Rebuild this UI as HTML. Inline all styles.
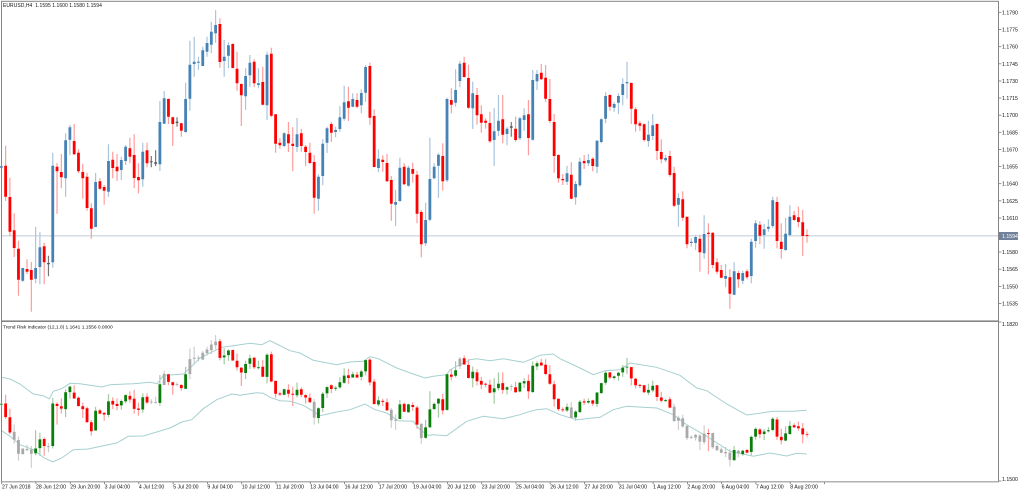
<!DOCTYPE html>
<html>
<head>
<meta charset="utf-8">
<style>
html,body{margin:0;padding:0;background:#fff;}
#w{position:relative;width:1024px;height:493px;overflow:hidden;background:#fff;}
svg{position:absolute;left:0;top:0;filter:blur(0.3px);}
text{font-family:"Liberation Sans",sans-serif;font-size:5.2px;fill:#111;}
.p{font-size:5px;letter-spacing:.05px;}
.q{font-size:4.85px;}
</style>
</head>
<body>
<div id="w">
<svg id="s" width="1024" height="493" viewBox="0 0 1024 493" xmlns="http://www.w3.org/2000/svg">
<rect x="0" y="0" width="1024" height="493" fill="#fff"/>
<rect x="1.4" y="235.1" width="997" height="1.4" fill="#d3dae0"/>
<g id="c"></g>
<g id="frame" fill="#858585">
<rect x="1" y="0.8" width="998" height="1"/>
<rect x="1" y="1" width="1" height="481"/>
<rect x="998" y="1" width="1" height="481"/>
<rect x="1" y="320.4" width="998" height="1.6"/>
<rect x="1" y="481.2" width="998" height="1.2" fill="#a0a0a0"/>
</g>
<g id="t" fill="#777"></g>
<rect x="999" y="232" width="19" height="8" fill="#6f8299"/>
<g>
<text x="3" y="6.8" class="p" xml:space="preserve">EURUSD,H4  1.1595 1.1600 1.1580 1.1594</text>
<text x="3" y="328.6" class="q">Trend Risk Indicator (12,1.0) 1.1641 1.1556 0.0000</text>
<text x="1002" y="14.3">1.1790</text>
<text x="1002" y="31.5">1.1775</text>
<text x="1002" y="48.7">1.1760</text>
<text x="1002" y="65.8">1.1745</text>
<text x="1002" y="83">1.1730</text>
<text x="1002" y="100">1.1715</text>
<text x="1002" y="117.2">1.1700</text>
<text x="1002" y="134.3">1.1685</text>
<text x="1002" y="151.4">1.1670</text>
<text x="1002" y="168.6">1.1655</text>
<text x="1002" y="185.7">1.1640</text>
<text x="1002" y="202.8">1.1625</text>
<text x="1002" y="220">1.1610</text>
<text x="1002" y="238.1" style="fill:#fff">1.1594</text>
<text x="1002" y="254">1.1580</text>
<text x="1002" y="271.2">1.1565</text>
<text x="1002" y="288.4">1.1550</text>
<text x="1002" y="305.5">1.1535</text>
<text x="1002" y="326">1.1820</text>
<text x="1002" y="480.8">1.1500</text>
<text x="2" y="488.4">27 Jun 2018</text>
<text x="36" y="488.4">28 Jun 12:00</text>
<text x="70.3" y="488.4">29 Jun 20:00</text>
<text x="104.6" y="488.4">3 Jul 04:00</text>
<text x="138.9" y="488.4">4 Jul 12:00</text>
<text x="173.2" y="488.4">5 Jul 20:00</text>
<text x="207.4" y="488.4">9 Jul 04:00</text>
<text x="241.7" y="488.4">10 Jul 12:00</text>
<text x="276" y="488.4">11 Jul 20:00</text>
<text x="310.3" y="488.4">13 Jul 04:00</text>
<text x="344.6" y="488.4">16 Jul 12:00</text>
<text x="378.8" y="488.4">17 Jul 20:00</text>
<text x="413.1" y="488.4">19 Jul 04:00</text>
<text x="447.4" y="488.4">20 Jul 12:00</text>
<text x="481.7" y="488.4">23 Jul 20:00</text>
<text x="516" y="488.4">25 Jul 04:00</text>
<text x="550.2" y="488.4">26 Jul 12:00</text>
<text x="584.5" y="488.4">27 Jul 20:00</text>
<text x="618.8" y="488.4">31 Jul 04:00</text>
<text x="653.1" y="488.4">1 Aug 12:00</text>
<text x="687.4" y="488.4">2 Aug 20:00</text>
<text x="721.6" y="488.4">6 Aug 04:00</text>
<text x="755.9" y="488.4">7 Aug 12:00</text>
<text x="790.2" y="488.4">8 Aug 20:00</text>
</g>
</svg>
</div>
<script>
var D="498,504,499,503,b;437,603,497,590,r;533,708,591,695,r;640,771,691,744,r;722,887,746,839,r;803,845,804,842,b;778,822,807,815,r;786,935,810,839,r;680,850,804,836,b;697,853,742,801,b;728,853,739,787,r;767,829,790,792,k;458,803,497,787,b;489,641,500,514,r;462,565,516,532,r;400,590,421,535,b;375,465,382,419,b;372,465,423,463,r;448,520,458,514,r;491,596,516,535,r;518,632,530,624,r;610,716,625,686,r;519,682,546,681,b;534,570,544,566,r;555,614,561,572,r;433,590,483,575,b;455,535,479,504,r;462,542,500,514,r;470,540,480,510,b;435,495,440,483,b;413,490,445,470,r;403,565,465,534,r;490,580,531,541,r;428,560,455,538,b;428,502,451,490,r;468,502,484,487,k;451,498,488,490,k;303,513,366,493,b;273,372,295,371,b;295,372,297,350,r;350,438,352,372,r;352,380,366,368,k;368,410,370,392,r;248,398,297,396,b;122,332,194,296,b;110,230,185,192,b;170,210,185,188,b;140,198,151,198,b;110,170,129,155,b;65,160,95,134,b;30,128,75,100,b;55,203,72,186,r;120,230,170,183,b;127,205,136,167,b;130,205,132,204,r;155,272,206,250,r;250,378,252,286,r;205,330,228,289,b;165,260,188,226,b;178,262,185,250,r;205,265,250,255,b;200,316,246,314,r;155,360,164,316,b;"
+"143,352,161,347,r;343,458,343,431,r;415,446,428,436,r;397,442,400,438,b;366,456,403,430,r;382,514,431,438,r;354,456,403,441,b;386,455,400,438,r;435,498,440,456,r;428,492,458,489,r;465,641,486,593,r;523,632,530,596,b;418,556,431,528,b;380,459,385,428,b;366,426,372,398,r;380,412,390,396,b;318,395,352,387,b;257,362,307,356,b;260,363,304,323,r;280,322,297,320,b;280,325,300,320,r;268,340,279,316,b;195,305,201,278,b;188,374,198,353,r;328,502,348,501,r;448,517,476,504,b;466,515,479,486,r;462,546,489,544,r;528,662,540,611,r;570,678,606,614,b;473,605,503,603,b;490,555,500,553,r;497,560,503,557,b;488,548,507,521,r;512,670,524,641,r;630,772,636,733,r;608,738,660,730,b;413,664,537,659,b;490,538,500,535,b;460,593,464,497,b;430,572,468,544,r;293,546,297,541,b;265,340,300,314,r;208,320,270,308,b;182,262,191,243,b;170,233,188,231,r;194,326,234,323,r;245,387,280,325,b;264,374,285,346,r;316,398,343,368,r;355,386,362,368,r;335,428,369,424,r;324,498,394,420,b;285,408,362,392,b;285,430,358,404,r;380,436,386,402,b;366,410,380,382,k;350,425,386,420,r;350,420,355,415,b;325,392,346,360,b;300,466,343,414,r;210,422,240,419,b;210,270,222,244,b;"
+"192,240,218,238,r;195,305,233,296,r;237,370,297,363,r;342,518,366,468,r;463,548,465,535,r;522,555,537,541,r;497,555,520,545,b;487,598,524,596,r;543,614,552,592,b;473,560,485,556,b;465,507,483,490,r;462,498,480,490,b;472,514,476,498,r;420,520,422,500,b;355,430,358,426,b;277,370,288,356,b;283,332,285,320,r;306,335,312,323,b;280,343,288,308,b;235,316,252,285,b;185,296,246,250,b;247,372,249,326,r;322,395,328,373,r;362,392,370,377,r;370,425,373,420,r;362,440,404,423,b;342,420,376,408,b;370,480,372,453,r;418,490,456,478,r;465,486,474,481,b;452,530,468,525,r;500,622,519,617,r;580,680,594,614,b;574,662,598,653,r;650,745,650,733,r;715,740,725,729,b;706,750,711,729,b;704,815,716,757,r;646,776,702,760,b;670,823,698,702,r;697,805,698,795,r;775,822,787,815,r;795,835,810,833,r;792,862,828,836,b;808,926,832,881,r;787,885,814,884,b;812,863,819,838,r;812,852,819,842,b;808,838,814,832,r;716,850,725,828,b;660,743,670,723,b;664,733,674,707,r;672,746,688,705,b;658,695,680,686,b;590,685,601,678,b;590,745,606,723,r;670,776,725,747,r;653,752,701,750,b;616,710,650,705,b;632,662,646,660,r;620,682,652,666,r;630,768,667,708,r;688,728,705,708,r";
var G=[3,4,5,6,7,11,35,36,38,41,44,45,46,47,48,49,50,73,91,92,98,107,119,133,157,158,159,160,161,162,163,164,166,167,168,169,170,172];
var g={};G.forEach(function(n){g[n]=1;});
var DX=4.2855,X0=1.33;
function L(z){return 335+(z/3-10)*0.44;}
var P={
 a:{b:"#4682b4",w:"#a9c5dd"},r:{b:"#ff0000",w:"#ff9c9c"},k:{b:"#555",w:"#777"},
 gn:{b:"#0a7d0a",w:"#a3cba3"},gy:{b:"#a9a9a9",w:"#cfcfcf"}
};
var m={};
function add(c,type,s){var k=c+"|"+type;(m[k]=m[k]||[]).push(s);}
D.split(";").forEach(function(r,i){
 var v=r.split(",");var hi=+v[0],lo=+v[1],t=+v[2],b=+v[3],c=v[4];
 var x=X0+DX*i;var w=(x).toFixed(2);
 if(b-t<3){t-=1;b+=1;}
 var p=c=="b"?P.a:c=="r"?P.r:P.k;
 add(p.w,"w","M"+w+" "+(hi/3).toFixed(1)+"V"+(lo/3).toFixed(1));
 add(p.b,"b","M"+w+" "+(t/3).toFixed(1)+"V"+(b/3).toFixed(1));
 var q=g[i]?P.gy:c=="r"?P.r:P.gn;
 add(q.w,"w","M"+w+" "+L(hi).toFixed(1)+"V"+L(lo).toFixed(1));
 add(q.b,"b","M"+w+" "+L(t).toFixed(1)+"V"+Math.max(L(b),L(t)+0.8).toFixed(1));
});
var html="";
Object.keys(m).filter(function(k){return k.split("|")[1]=="w";}).forEach(function(k){
 html+='<path d="'+m[k].join("")+'" stroke="'+k.split("|")[0]+'" stroke-width="1.2" fill="none"/>';
});
var U=[[0,[5,178,30,183,60,198,100,228,130,233,148,243,160,220,185,212,210,196,240,197,280,203,305,207,330,200,400,197,450,193,472,197,490,172,520,170,550,168,570,150,600,120,640,100,665,88,700,83,750,76,785,80,810,68]],
[270,[20,78,60,98,90,105,130,127,200,140,240,132,280,130,300,116,325,122,380,150,430,168,465,180,490,175,530,170,540,155,570,140,600,125,620,122,660,128,700,122,760,133,780,125,810,112]],
[540,[40,108,60,122,120,150,160,170,195,158,240,155,270,135,350,148,420,172,470,210,500,218,560,258,620,291,700,280,760,280,800,277]]];
var W=[[0,[5,338,30,355,60,380,100,395,130,418,158,432,185,420,220,395,265,393,310,383,350,375,385,355,430,354,470,342,510,330,545,312,575,305,610,272,650,245,695,228,720,232,770,224,790,226,810,238]],
[270,[30,248,60,250,100,262,130,280,150,293,200,282,240,275,285,258,315,275,350,285,385,308,430,310,450,335,475,352,490,350,530,353,590,310,640,295,700,302,750,290,770,283,800,275]],
[540,[20,272,60,290,110,305,180,298,220,275,260,265,350,270,400,290,440,320,500,355,570,400,640,415,690,405,740,414,770,406,800,408]]];
function poly(A){var o=[];A.forEach(function(s){for(var i=0;i<s[1].length;i+=2){o.push((s[0]+s[1][i]/3).toFixed(1)+","+(318+s[1][i+1]/3).toFixed(1));}});
 return '<polyline points="'+o.join(" ")+'" fill="none" stroke="#a6d0d0" stroke-width="1"/>';}
html+=poly(U)+poly(W);
Object.keys(m).filter(function(k){return k.split("|")[1]=="b";}).forEach(function(k){
 html+='<path d="'+m[k].join("")+'" stroke="'+k.split("|")[0]+'" stroke-width="2.8" fill="none"/>';
});
document.getElementById("c").innerHTML=html;
var t="";
for(var i=0;i<25;i++){t+='<rect x="'+(1.3+34.284*i).toFixed(1)+'" y="482" width="0.8" height="2.2"/>';}
[12.3,29.5,46.7,63.8,81,98,115.2,132.3,149.4,166.6,183.7,200.8,218,235.7,252,269.2,286.4,303.5,322,481].forEach(function(y){t+='<rect x="999" y="'+(y-.4)+'" width="2.4" height="0.8"/>';});
document.getElementById("t").innerHTML=t;
</script>
</body>
</html>
